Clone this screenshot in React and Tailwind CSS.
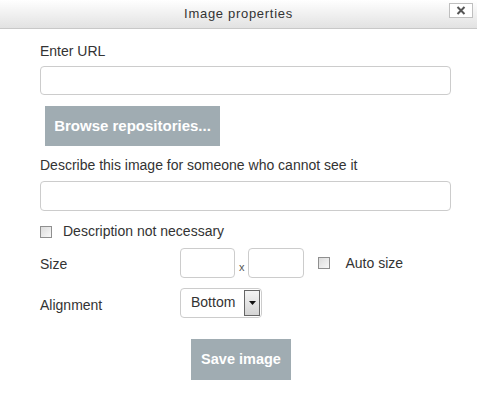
import React from 'react';

const Checkbox = () => (
  <span className="inline-block w-[12px] h-[12px] border border-[#8f8f8f] bg-gradient-to-br from-[#dcdcdc] to-[#f8f8f8]" />
);

export default function App() {
  return (
    <div className="w-[477px] h-[406px] bg-white text-[14px] text-[#333] font-['Liberation_Sans',Arial,sans-serif] relative">
      {/* Header */}
      <div className="h-[29px] border-b border-[#c8c8c8] bg-gradient-to-b from-white to-[#e2e2e2] flex items-center justify-center relative">
        <span className="tracking-[0.7px] text-[13px] text-[#333]">Image properties</span>
        <button className="absolute right-[4px] top-[3px] w-[24px] h-[15px] border border-[#bfbfbf] bg-white flex items-center justify-center">
          <svg width="10" height="9" viewBox="0 0 10 9">
            <path d="M1.5 1 L8.5 8 M8.5 1 L1.5 8" stroke="#555" strokeWidth="2" />
          </svg>
        </button>
      </div>

      <div className="pl-[40px] pr-[26px]">
        <div className="pt-[14px] h-[37px] leading-[17px]">Enter URL</div>
        <div className="w-[411px] h-[29px] border border-[#cccccc] rounded-[4px] bg-white" />
        <button className="mt-[11px] ml-[5px] w-[175px] h-[40px] bg-[#a0acb2] text-white font-bold text-[15px] block">
          Browse repositories...
        </button>

        <div className="mt-[11px] h-[24px] leading-[17px]">Describe this image for someone who cannot see it</div>
        <div className="w-[411px] h-[30px] border border-[#cccccc] rounded-[4px] bg-white" />

        <div className="mt-[14px] flex items-center h-[13px]">
          <Checkbox />
          <span className="ml-[11px]">Description not necessary</span>
        </div>

        <div className="mt-[9px] flex items-center h-[31px]">
          <span className="w-[140px] pt-[4px]">Size</span>
          <div className="w-[55px] h-[30px] border border-[#cccccc] rounded-[4px]" />
          <span className="text-[11px] text-[#555] ml-[4px] mr-[3px] pt-[10px]">x</span>
          <div className="w-[56px] h-[30px] border border-[#cccccc] rounded-[4px]" />
          <span className="ml-[14px] flex items-center">
            <Checkbox />
          </span>
          <span className="ml-[16px] pt-[2px]">Auto size</span>
        </div>

        <div className="mt-[9px] flex items-center h-[31px]">
          <span className="w-[140px] pt-[5px]">Alignment</span>
          <div className="w-[82px] h-[30px] border border-[#cccccc] rounded-[4px] flex items-center justify-between pl-[10px] pr-[1px]">
            <span className="text-[14px] text-[#333]">Bottom</span>
            <span className="w-[16px] h-[26px] border border-[#666] bg-gradient-to-b from-[#f4f4f4] to-[#d4d4d4] flex items-center justify-center">
              <svg width="7" height="4" viewBox="0 0 7 4"><path d="M0 0 H7 L3.5 4 Z" fill="#111" /></svg>
            </span>
          </div>
        </div>

        <div className="mt-[21px] flex">
          <button className="ml-[151px] w-[100px] h-[41px] bg-[#a0acb2] text-white font-bold text-[14.5px]">Save image</button>
        </div>
      </div>
    </div>
  );
}
